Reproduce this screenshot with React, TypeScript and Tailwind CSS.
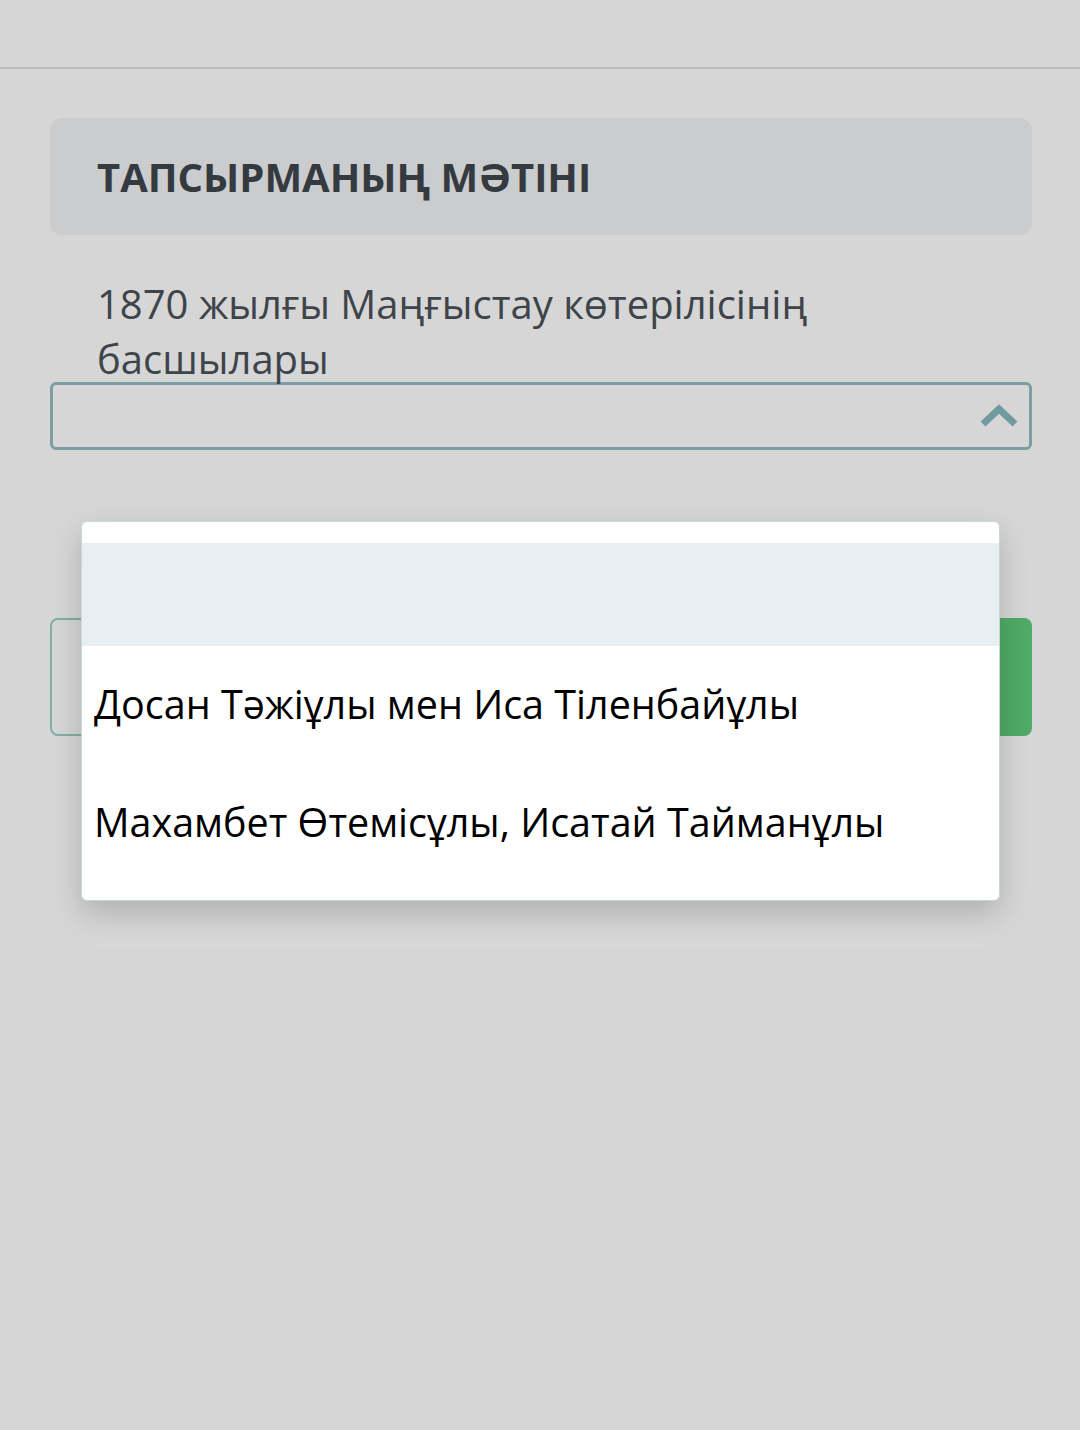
import React from "react";

export default function App() {
  return (
    <div
      className="relative w-[1080px] h-[1430px] bg-[#d6d6d6] overflow-hidden"
      style={{ fontFamily: '"Open Sans", "Noto Sans", sans-serif' }}
    >
      <div className="h-[69px] border-b-2 border-[#bdbdbd]" />
      <div className="pl-[50px] pr-[48px] pt-[49px]">
        <div className="h-[117px] rounded-xl bg-[#cbcccd] px-[47px] flex items-center">
          <span className="font-bold text-[40px] text-[#343a40] font-stretch-[88%]">
            ТАПСЫРМАНЫҢ МӘТІНІ
          </span>
        </div>
        <div className="mt-[41px] px-[47px] text-[40px] leading-[55px] text-[#3e4449]">
          1870 жылғы Маңғыстау көтерілісінің басшылары
        </div>
        <div className="mt-[-4px] h-[68px] rounded-md border-[3px] border-[#7c9ea2] flex items-center justify-end pr-[10px]">
          <svg width="40" height="28" viewBox="0 0 40 28">
            <path d="M4 22 L20 7 L36 22" fill="none" stroke="#6f9ba0" strokeWidth="7" strokeLinecap="butt" strokeLinejoin="miter" />
          </svg>
        </div>
        <div className="mt-[168px] flex gap-[20px] h-[118px]">
          <div className="flex-1 rounded-lg border-2 border-[#7fb0a6]" />
          <div className="flex-1 rounded-lg bg-[#4fab66]" />
        </div>
        <div className="mt-[209px] mx-[47px] h-px bg-[#dcdcdc]" />
      </div>

      <div className="absolute left-[81px] top-[521px] w-[919px] h-[380px] bg-white rounded-md border border-[#c8d6d6] shadow-[0_12px_30px_rgba(0,0,0,0.18)] overflow-hidden">
        <div className="h-[21px]" />
        <div className="h-[103px] bg-[#e8eff2]" />
        <div className="h-[118px] flex items-center pl-[12px] text-[39.5px] text-black font-stretch-[88%]">
          Досан Тәжіұлы мен Иса Тіленбайұлы
        </div>
        <div className="h-[118px] flex items-center pl-[12px] text-[39.5px] text-black font-stretch-[88%]">
          Махамбет Өтемісұлы, Исатай Тайманұлы
        </div>
      </div>
    </div>
  );
}
